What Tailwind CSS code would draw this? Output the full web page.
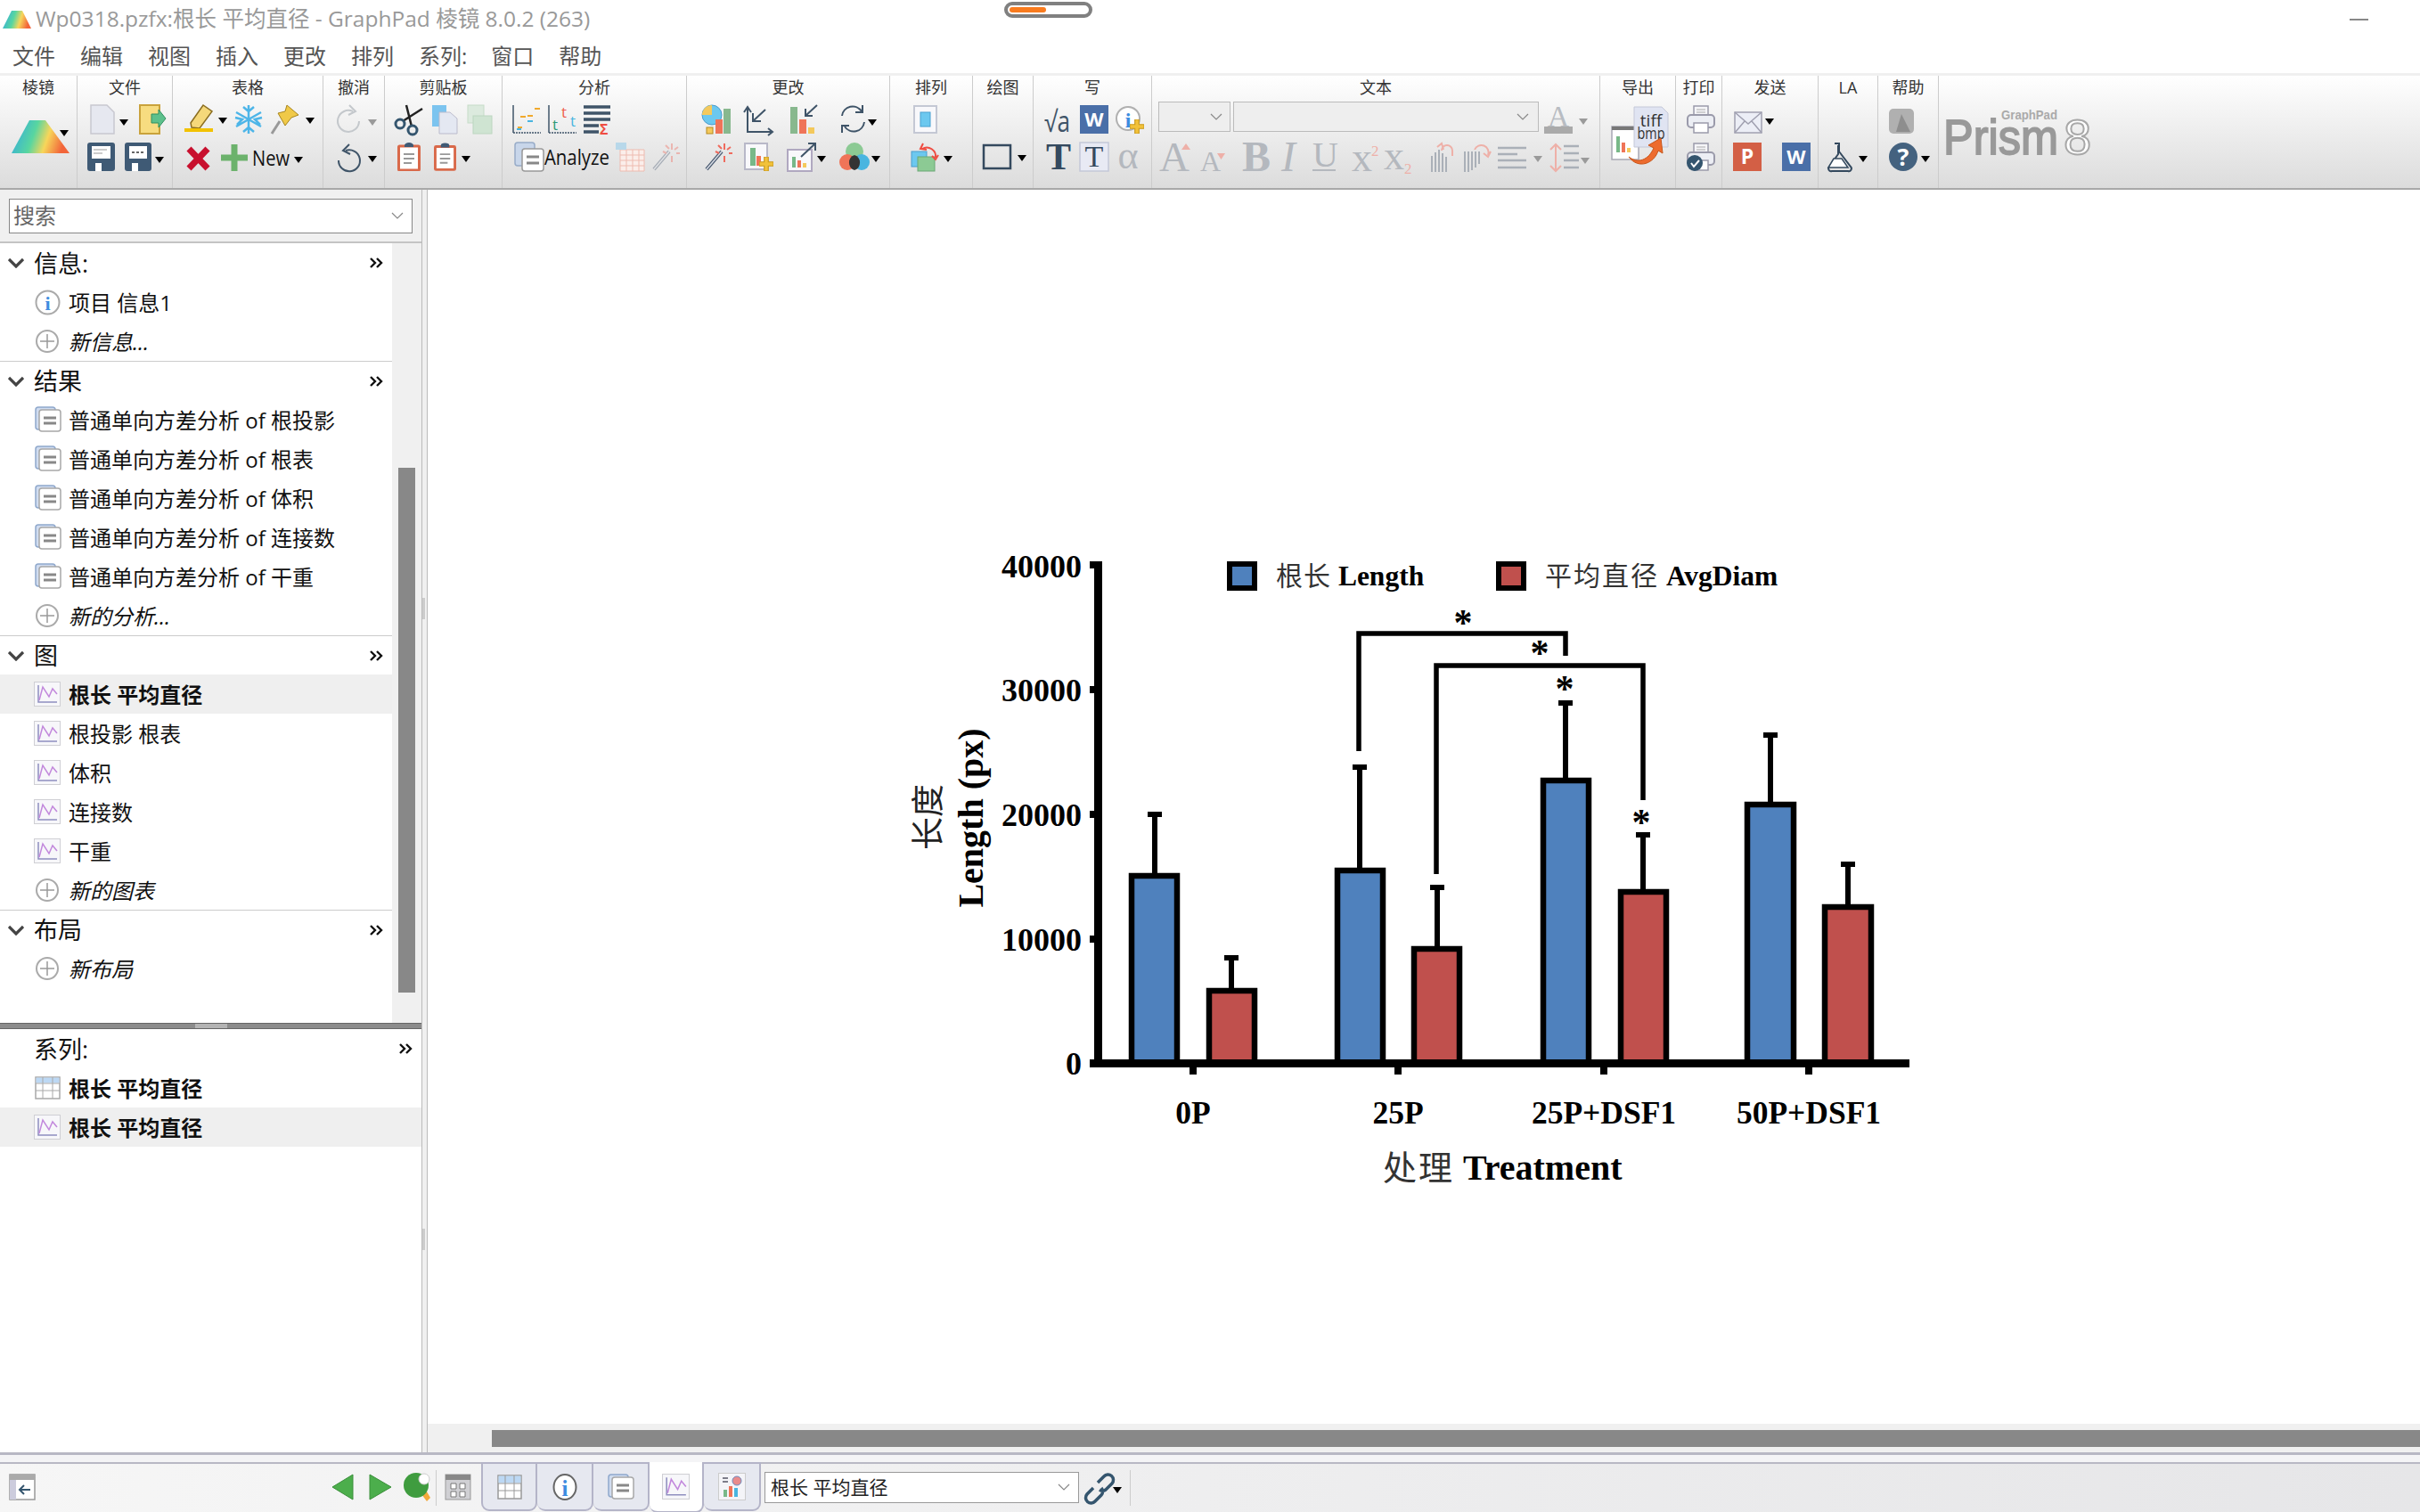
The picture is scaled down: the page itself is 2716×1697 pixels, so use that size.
<!DOCTYPE html>
<html lang="zh-CN">
<head>
    <meta charset="UTF-8">
    <title>GraphPad Prism</title>
    <script src="https://cdn.jsdelivr.net/npm/@tailwindcss/browser@4"></script>
</head>
<body class="w-[2716px] h-[1697px] overflow-hidden flex flex-col bg-white text-[#111] font-['Open_Sans','Noto_Sans_CJK_SC',sans-serif]">

    <!-- shared icons -->
    <svg class="absolute w-0 h-0">
        <defs>
            <linearGradient id="prismGrad" x1="0" y1="0" x2="1" y2="0.2">
                <stop offset="0" stop-color="#2ea6e6"/><stop offset="0.45" stop-color="#58d6a0"/><stop offset="0.7" stop-color="#f7d65a"/><stop offset="1" stop-color="#f2653a"/>
            </linearGradient>
            <symbol id="arrow" viewBox="0 0 10 7"><path d="M0 0h10L5 7z" fill="#000"/></symbol>
            <symbol id="arrowGrey" viewBox="0 0 10 7"><path d="M0 0h10L5 7z" fill="#9a9a9a"/></symbol>
            <symbol id="graph" viewBox="0 0 30 28">
                <rect x="0.5" y="0.5" width="29" height="27" fill="#f7f7fa" stroke="#cfcfd4"/>
                <path d="M5 4v19h21" fill="none" stroke="#8f8fc0" stroke-width="1.5"/>
                <path d="M6 21l4-15 7 11 4-9 5 6" fill="none" stroke="#c288dc" stroke-width="1.5"/>
            </symbol>
            <symbol id="result" viewBox="0 0 30 30">
                <rect x="1" y="1" width="22" height="25" rx="3" fill="#d0dcf0" stroke="#8fa8cc" stroke-width="1.5"/>
                <rect x="5" y="4" width="24" height="24" rx="3" fill="#fff" stroke="#a8a8a8" stroke-width="1.5"/>
                <path d="M10 13h14M10 19h14" stroke="#888" stroke-width="3"/>
            </symbol>
            <symbol id="plus" viewBox="0 0 28 28">
                <circle cx="14" cy="14" r="12" fill="#fff" stroke="#aaa" stroke-width="2"/>
                <path d="M14 6v16M6 14h16" stroke="#999" stroke-width="1.5"/>
            </symbol>
            <symbol id="chevron" viewBox="0 0 18 12"><path d="M1 2l8 8 8-8" fill="none" stroke="#444" stroke-width="3.200"/></symbol>
            <symbol id="doubleRight" viewBox="0 0 16 12"><path d="M2 1l5 5-5 5M9 1l5 5-5 5" fill="none" stroke="#111" stroke-width="2.4"/></symbol>
            <symbol id="combo" viewBox="0 0 14 9"><path d="M1 1l6 6 6-6" fill="none" stroke="#888" stroke-width="1.2"/></symbol>
            <symbol id="clipboard" viewBox="0 0 26 32">
                <rect x="1.5" y="4" width="23" height="27" rx="1" fill="#fff" stroke="#d9694a" stroke-width="3"/>
                <path d="M8 5V3a5 3 0 0 1 10 0v2z" fill="#3f5a75"/>
                <path d="M7 13h12M7 18h12M7 23h9" stroke="#999" stroke-width="2"/>
            </symbol>
            <symbol id="printer" viewBox="0 0 32 32">
                <rect x="8" y="1" width="16" height="12" fill="#f5f5f8" stroke="#9a9aaa" stroke-width="1.5"/>
                <rect x="1" y="11" width="30" height="14" rx="4" fill="#eceef4" stroke="#9a9aaa" stroke-width="2"/>
                <rect x="8" y="20" width="16" height="11" fill="#fff" stroke="#9a9aaa" stroke-width="1.5"/>
                <path d="M11 5h10M11 8h10" stroke="#aaa"/>
            </symbol>
            <symbol id="wand" viewBox="0 0 32 32">
                <path d="M3 30L20 10" stroke="#4a5a70" stroke-width="4"/>
                <path d="M3 30L20 10" stroke="#d8dce4" stroke-width="1.5"/>
                <path d="M23 1v7M23 15v7M13 10l4 2M28 12h4M16 3l4 4M30 5l-4 3" stroke="#ef6b5e" stroke-width="2"/>
            </symbol>
            <symbol id="cross" viewBox="0 0 14 14"><path d="M5 0h4v5h5v4H9v5H5V9H0V5h5z" fill="#f2c23a" stroke="#c99a20"/></symbol>
        </defs>
    </svg>

    <!-- title bar -->
    <header class="relative h-[42px] flex items-center pl-[3px] shrink-0">
        <svg width="32" height="20" viewBox="0 0 32 20" class="mt-[2px]"><path d="M10 0h12l10 20H0z" fill="url(#prismGrad)"/></svg>
        <span class="ml-[5px] text-[24.5px] leading-none text-[#999]">Wp0318.pzfx:根长 平均直径 - GraphPad 棱镜 8.0.2 (263)</span>
        <div class="absolute left-[1127px] top-[2px] w-[99px] h-[18px] rounded-[9px] border-[4px] border-[#808080] bg-white p-[2px]">
            <div class="w-[41px] h-[6px] rounded-[3px] bg-[#f97b1e]"></div>
        </div>
        <div class="absolute left-[2637px] top-[21px] w-[21px] h-[2px] bg-[#888]"></div>
    </header>

    <!-- menu bar -->
    <nav class="h-[40px] flex items-center pl-[14px] pt-[2px] gap-[28px] text-[24px] leading-none text-[#555] shrink-0">
        <span>文件</span><span>编辑</span><span>视图</span><span>插入</span><span>更改</span><span>排列</span><span class="mr-[-1px]">系列:</span><span>窗口</span><span>帮助</span>
    </nav>

    <!-- ribbon -->
    <section class="h-[131px] flex shrink-0 border-t-[3px] border-[#f0f0f0] border-b-[2px] border-b-[#a8a8a8] bg-linear-to-b from-white to-[#dcdcdc] text-[18px] leading-none text-[#333]">
        <div class="w-[87px] flex flex-col border-r border-[#ccc]">
            <div class="h-[25px] flex items-center justify-center">棱镜</div>
            <svg width="86" height="101" viewBox="0 110 86 101">
                <path d="M33 135h18l27 37H13z" fill="url(#prismGrad)"/>
                <use href="#arrow" x="67" y="146" width="10" height="7"/>
            </svg>
        </div>
        <div class="w-[107px] flex flex-col border-r border-[#ccc]">
            <div class="h-[25px] flex items-center justify-center">文件</div>
            <svg width="106" height="101" viewBox="87 110 106 101">
                <path d="M102 118h18l8 8v24h-26z" fill="#e6e8f0" stroke="#c8c8d0" stroke-width="1.5"/>
                <use href="#arrow" x="134" y="134" width="10" height="7"/>
                <rect x="157" y="118" width="22" height="32" fill="#f7dc80" stroke="#c9a23c" stroke-width="2"/>
                <path d="M170 128h8v-5l8 10-8 10v-5h-8z" fill="#5cc08c" stroke="#2f8f60"/>
                <rect x="98" y="160" width="31" height="32" rx="3" fill="#3f5a75"/><rect x="103" y="164" width="21" height="14" fill="#fff"/><rect x="107" y="183" width="7" height="9" fill="#fff"/>
                <path d="M105 168h15M105 172h10" stroke="#999"/>
                <rect x="140" y="160" width="30" height="32" rx="3" fill="#3f5a75"/><rect x="145" y="164" width="20" height="14" fill="#fff"/><rect x="148" y="183" width="7" height="9" fill="#fff"/>
                <path d="M148 171h3M153 171h3M158 171h3" stroke="#666" stroke-width="2"/>
                <use href="#arrow" x="174" y="176" width="10" height="7"/>
            </svg>
        </div>
        <div class="w-[169px] flex flex-col border-r border-[#ccc]">
            <div class="h-[25px] flex items-center justify-center">表格</div>
            <svg width="168" height="101" viewBox="194 110 168 101">
                <path d="M214 138l14-20 10 7-14 19-9-1z" fill="#f5d87a" stroke="#8a6d20" stroke-width="1.5"/><rect x="207" y="144" width="32" height="4" fill="#f2c200"/>
                <use href="#arrow" x="245" y="132" width="10" height="7"/>
                <path d="M279 118v32M265 126l28 16M265 142l28-16M273 120l6 5 6-5M273 148l6-5 6 5M264 132l8 2-6 6M294 132l-8 2 6 6" fill="none" stroke="#4db5e8" stroke-width="2.5"/>
                <path d="M322 118l13 11-8 3-7 9-8-14 8-2z" fill="#f0c948" stroke="#a88620"/><path d="M314 136l-9 14" stroke="#999" stroke-width="3"/>
                <use href="#arrow" x="343" y="132" width="10" height="7"/>
                <path d="M212 167l21 22M233 167l-21 22" stroke="#c8102e" stroke-width="7"/>
                <path d="M263 162v30M248 177h30" stroke="#6cb26c" stroke-width="7"/>
                <text x="283" y="186" font-size="23" textLength="42" lengthAdjust="spacingAndGlyphs" fill="#111">New</text>
                <use href="#arrow" x="330" y="176" width="10" height="7"/>
            </svg>
        </div>
        <div class="w-[69px] flex flex-col border-r border-[#ccc]">
            <div class="h-[25px] flex items-center justify-center">撤消</div>
            <svg width="68" height="101" viewBox="363 110 68 101">
                <path d="M396 125a12 12 0 1 0 7 11M392 118l7 7-8 4" fill="none" stroke="#c4c8cc" stroke-width="2"/>
                <use href="#arrowGrey" x="413" y="134" width="10" height="7"/>
                <path d="M388 169a12 12 0 1 1-8 11M392 162l-7 7 8 4" fill="none" stroke="#3f5468" stroke-width="2"/>
                <use href="#arrow" x="413" y="175" width="10" height="7"/>
            </svg>
        </div>
        <div class="w-[132px] flex flex-col border-r border-[#ccc]">
            <div class="h-[25px] flex items-center justify-center">剪贴板</div>
            <svg width="131" height="101" viewBox="432 110 131 101">
                <path d="M474 122l-22 14M456 118l6 24" stroke="#222" stroke-width="2.5"/>
                <circle cx="449" cy="139" r="5" fill="none" stroke="#34556e" stroke-width="3"/><circle cx="463" cy="146" r="5" fill="none" stroke="#34556e" stroke-width="3"/>
                <rect x="485" y="118" width="16" height="24" fill="#7cc4ef"/><path d="M493 126h12l8 7v17h-20z" fill="#e4e8f2" stroke="#bbc"/>
                <rect x="525" y="118" width="18" height="20" fill="#dceade" stroke="#c6dcc8"/><rect x="531" y="130" width="21" height="20" fill="#cfe4d2" stroke="#bcd6c0"/>
                <use href="#clipboard" x="446" y="160" width="26" height="32"/>
                <use href="#clipboard" x="487" y="160" width="25" height="32"/>
                <use href="#arrow" x="518" y="175" width="10" height="7"/>
            </svg>
        </div>
        <div class="w-[207px] flex flex-col border-r border-[#ccc]">
            <div class="h-[25px] flex items-center justify-center">分析</div>
            <svg width="206" height="101" viewBox="564 110 206 101">
                <path d="M576 118v31" fill="none" stroke="#3f5468" stroke-width="1.5"/><path d="M576 149h31" stroke="#3f5468" stroke-width="1.5" stroke-dasharray="2 1"/>
                <path d="M581 143h5M592 130h6M584 131h6M600 122h6" stroke="#f0a92c" stroke-width="2"/><path d="M580 145h5M592 136h6" stroke="#49b5e0" stroke-width="2"/>
                <path d="M616 118v31" fill="none" stroke="#3f5468" stroke-width="1.5"/><path d="M616 149h31" stroke="#3f5468" stroke-width="1.5" stroke-dasharray="2 1"/>
                <text x="620" y="146" font-size="17" fill="#2e9a78">t</text><text x="630" y="132" font-size="17" fill="#ef5e4e">t</text><text x="640" y="142" font-size="17" fill="#49b5e0">t</text>
                <path d="M655 120h30M655 127h30M655 134h30M655 141h17M655 148h17" stroke="#3f5468" stroke-width="3.5"/>
                <text x="673" y="151" font-size="16" font-weight="700" fill="#ef4d42">Σ</text>
                <rect x="578" y="160" width="22" height="26" rx="3" fill="#c8d6ea" stroke="#98acc8" stroke-width="1.5"/>
                <rect x="586" y="167" width="24" height="25" rx="3" fill="#fff" stroke="#999" stroke-width="1.5"/>
                <path d="M591 176h14M591 183h14" stroke="#888" stroke-width="3"/>
                <text x="611" y="185" font-size="24" textLength="73" lengthAdjust="spacingAndGlyphs" fill="#111">Analyze</text>
                <path d="M696 168h27v24h-27zM703 168v24M710 168v24M717 168v24M696 174h27M696 180h27M696 186h27" fill="#fbeeea" stroke="#eebbb0"/>
                <path d="M691 160h12v8h-12z" fill="#b8d8ea"/>
                <use href="#wand" x="731" y="160" width="32" height="32" opacity="0.4"/>
            </svg>
        </div>
        <div class="w-[228px] flex flex-col border-r border-[#ccc]">
            <div class="h-[25px] flex items-center justify-center">更改</div>
            <svg width="227" height="101" viewBox="771 110 227 101">
                <circle cx="799" cy="129" r="11" fill="#6cc8ef" stroke="#4a9ccc"/><path d="M799 129v-11a11 11 0 0 0-11 11z" fill="#f4c95c"/>
                <rect x="812" y="122" width="8" height="28" fill="#88b88e"/><rect x="803" y="134" width="8" height="16" fill="#ef7458"/><rect x="793" y="143" width="7" height="7" fill="#f4c95c" stroke="#b58a20"/>
                <path d="M839 121v27h27M835 126l4-6 4 6M862 144l5 4-5 4M845 136l14-13M845 127v9h9" fill="none" stroke="#3f5468" stroke-width="2"/>
                <rect x="887" y="120" width="8" height="30" fill="#88b88e"/><rect x="897" y="134" width="8" height="16" fill="#ef7458"/><rect x="907" y="143" width="7" height="7" fill="#f4c95c"/>
                <path d="M904 130l13-12M904 122v8h8" fill="none" stroke="#3f5468" stroke-width="2"/>
                <path d="M945 130a12 12 0 0 1 22-5M970 137a12 12 0 0 1-22 5M968 118v8h-8M945 149v-8h8" fill="none" stroke="#3f5468" stroke-width="2"/>
                <use href="#arrow" x="974" y="134" width="10" height="7"/>
                <use href="#wand" x="790" y="160" width="32" height="32"/>
                <rect x="836" y="161" width="25" height="29" fill="#f8f8fb" stroke="#b8b8c8" stroke-width="2"/><rect x="842" y="166" width="6" height="20" fill="#78b888"/><rect x="849" y="175" width="5" height="11" fill="#ef7458"/>
                <use href="#cross" x="852" y="176" width="16" height="16"/>
                <rect x="884" y="168" width="27" height="24" fill="#f8f8fb" stroke="#b0a8c0" stroke-width="2"/><rect x="889" y="176" width="4" height="12" fill="#78b888"/><rect x="895" y="180" width="4" height="8" fill="#ef7458"/><rect x="901" y="183" width="4" height="5" fill="#f4c95c"/>
                <path d="M899 176l16-15M907 161h8v8" fill="none" stroke="#3f5468" stroke-width="2"/>
                <use href="#arrow" x="917" y="175" width="10" height="7"/>
                <ellipse cx="959" cy="170" rx="10" ry="10" fill="#8cca94"/><circle cx="951" cy="182" r="9" fill="#ef7458"/><circle cx="967" cy="182" r="9" fill="#49b5e0"/><path d="M959 174a9 9 0 0 0 0 17 9 9 0 0 0 0-17z" fill="#333"/>
                <use href="#arrow" x="978" y="175" width="10" height="7"/>
            </svg>
        </div>
        <div class="w-[93px] flex flex-col border-r border-[#ccc]">
            <div class="h-[25px] flex items-center justify-center">排列</div>
            <svg width="92" height="101" viewBox="999 110 92 101">
                <rect x="1026" y="119" width="25" height="30" fill="#f8f8fb" stroke="#c4c8d4" stroke-width="2"/><rect x="1033" y="126" width="11" height="16" fill="#6cc8ef" stroke="#49a0d0"/>
                <rect x="1023" y="170" width="17" height="17" fill="#6cc8ef" stroke="#4a9ccc"/><rect x="1030" y="176" width="19" height="16" fill="#8cca94" stroke="#6aa874"/>
                <path d="M1035 167a10 10 0 0 1 15 10M1036 161l-3 6 7 1M1046 175l4 4 3-5" fill="none" stroke="#ef4d42" stroke-width="2"/>
                <use href="#arrow" x="1059" y="175" width="10" height="7"/>
            </svg>
        </div>
        <div class="w-[68px] flex flex-col border-r border-[#ccc]">
            <div class="h-[25px] flex items-center justify-center">绘图</div>
            <svg width="67" height="101" viewBox="1092 110 67 101">
                <rect x="1104" y="163" width="30" height="26" fill="none" stroke="#34495e" stroke-width="2.5"/>
                <use href="#arrow" x="1142" y="174" width="10" height="7"/>
            </svg>
        </div>
        <div class="w-[133px] flex flex-col border-r border-[#ccc]">
            <div class="h-[25px] flex items-center justify-center">写</div>
            <svg width="132" height="101" viewBox="1160 110 132 101">
                <text x="1172" y="148" font-size="32" textLength="29" lengthAdjust="spacingAndGlyphs" fill="#3f5468">√a</text>
                <rect x="1212" y="118" width="32" height="32" fill="#4a6fa8"/><text x="1228" y="142" font-size="22" font-weight="700" text-anchor="middle" fill="#fff">W</text>
                <circle cx="1266" cy="133" r="13" fill="#fff" stroke="#b0b0b0" stroke-width="2"/><text x="1266" y="143" font-size="24" font-weight="700" font-family="Liberation Serif" text-anchor="middle" fill="#3d8ce0">i</text>
                <use href="#cross" x="1268" y="134" width="16" height="16"/>
                <text x="1188" y="190" font-size="42" font-weight="700" font-family="Liberation Serif" text-anchor="middle" fill="#34495e">T</text>
                <rect x="1212" y="160" width="32" height="32" fill="#e8eaf4" stroke="#c4c8d8" stroke-width="1.5"/><text x="1228" y="187" font-size="34" font-family="Liberation Serif" text-anchor="middle" fill="#34495e">T</text>
                <text x="1266" y="189" font-size="44" font-family="Liberation Serif" text-anchor="middle" fill="#b4b8be">α</text>
            </svg>
        </div>
        <div class="w-[503px] flex flex-col border-r border-[#ccc]">
            <div class="h-[25px] flex items-center justify-center">文本</div>
            <svg width="502" height="101" viewBox="1293 110 502 101" font-family="Liberation Serif">
                <rect x="1300.5" y="114.5" width="80" height="33" fill="#eee" stroke="#bbb"/><use href="#combo" x="1358" y="127" width="14" height="9"/>
                <rect x="1384.5" y="114.5" width="342" height="33" fill="#eee" stroke="#bbb"/><use href="#combo" x="1702" y="127" width="14" height="9"/>
                <text x="1749" y="142" font-size="34" text-anchor="middle" fill="#b8bcc2">A</text><rect x="1733" y="142" width="32" height="8" fill="#aaa"/>
                <use href="#arrowGrey" x="1772" y="133" width="10" height="7"/>
                <g fill="#b4b8be">
                    <text x="1301" y="192" font-size="47">A</text><path d="M1331 161l5 7h-10z" fill="#eeb0a8"/>
                    <text x="1347" y="192" font-size="32">A</text><path d="M1366 172h9l-4.500 7z" fill="#eeb0a8"/>
                    <text x="1394" y="192" font-size="48" font-weight="700">B</text>
                    <text x="1438" y="192" font-size="48" font-style="italic">I</text>
                    <text x="1473" y="187" font-size="40">U</text><rect x="1473" y="190" width="26" height="2"/>
                    <text x="1517" y="192" font-size="46">x</text><text x="1539" y="175" font-size="17" fill="#eeb0a8">2</text>
                    <text x="1553" y="190" font-size="46">x</text><text x="1576" y="195" font-size="17" fill="#eeb0a8">2</text>
                </g>
                <path d="M1607 175v18M1611 171v22M1615 168v25M1619 172v21M1623 176v17" stroke="#aab0b8" stroke-width="2"/><path d="M1630 175v-6a6 6 0 0 0-12 0M1613 165l5-4 2 7" fill="none" stroke="#eeb0a8" stroke-width="2"/>
                <path d="M1644 170v23M1648 170v23M1652 170v21M1656 170v18M1660 170v14" stroke="#aab0b8" stroke-width="2"/><path d="M1655 168a7 7 0 0 1 15 6M1665 172l5 4 3-6" fill="none" stroke="#eeb0a8" stroke-width="2"/>
                <path d="M1681 166h32M1681 173h22M1681 180h32M1681 188h32" stroke="#aab0b8" stroke-width="2.5"/>
                <use href="#arrowGrey" x="1721" y="175" width="10" height="7"/>
                <path d="M1746 162v30M1740 168l6-6 6 6M1740 186l6 6 6-6" fill="none" stroke="#eeb0a8" stroke-width="2"/>
                <path d="M1755 164h17M1755 172h17M1755 180h17M1755 188h17" stroke="#aab0b8" stroke-width="2.5"/>
                <use href="#arrowGrey" x="1774" y="177" width="10" height="7"/>
            </svg>
        </div>
        <div class="w-[85px] flex flex-col border-r border-[#ccc]">
            <div class="h-[25px] flex items-center justify-center">导出</div>
            <svg width="84" height="101" viewBox="1796 110 84 101">
                <rect x="1809" y="142" width="30" height="37" fill="#fff" stroke="#a8a8b4" stroke-width="1.5"/><rect x="1809" y="142" width="30" height="4" fill="#777"/>
                <rect x="1814" y="153" width="4" height="18" fill="#78b888"/><rect x="1820" y="160" width="4" height="11" fill="#ef7458"/><rect x="1826" y="166" width="4" height="5" fill="#f4c95c"/>
                <path d="M1834 120h31l7 7v38h-38z" fill="#e0e4f2" stroke="#c4c8d8"/>
                <text x="1853" y="142" font-size="19" text-anchor="middle" fill="#333">tiff</text>
                <text x="1853" y="156" font-size="19" text-anchor="middle" textLength="31" lengthAdjust="spacingAndGlyphs" fill="#333">bmp</text>
                <path d="M1828 176c10 8 22 4 28-10l-6-3 14-8 2 17-5-3c-4 14-22 22-33 7z" fill="#ed6b2e" stroke="#c85518"/>
            </svg>
        </div>
        <div class="w-[52px] flex flex-col border-r border-[#ccc]">
            <div class="h-[25px] flex items-center justify-center">打印</div>
            <svg width="51" height="101" viewBox="1881 110 51 101">
                <use href="#printer" x="1893" y="118" width="32" height="32"/>
                <use href="#printer" x="1893" y="160" width="32" height="32"/>
                <circle cx="1902" cy="183" r="9" fill="#34556e"/><path d="M1898 183l3 4 6-7" fill="none" stroke="#fff" stroke-width="2"/>
            </svg>
        </div>
        <div class="w-[108px] flex flex-col border-r border-[#ccc]">
            <div class="h-[25px] flex items-center justify-center">发送</div>
            <svg width="107" height="101" viewBox="1933 110 107 101">
                <rect x="1947" y="126" width="30" height="23" fill="#eceef6" stroke="#a0a0b0" stroke-width="1.5"/><path d="M1947 126l15 13 15-13M1947 149l11-13M1977 149l-11-13" fill="none" stroke="#a0a0b0" stroke-width="1.5"/>
                <use href="#arrow" x="1981" y="133" width="10" height="7"/>
                <rect x="1945" y="160" width="32" height="32" fill="#d35f45"/><text x="1961" y="184" font-size="23" font-weight="700" text-anchor="middle" fill="#fff">P</text>
                <rect x="2000" y="160" width="32" height="32" fill="#4a6fa8"/><text x="2016" y="184" font-size="22" font-weight="700" text-anchor="middle" fill="#fff">W</text>
            </svg>
        </div>
        <div class="w-[67px] flex flex-col border-r border-[#ccc]">
            <div class="h-[25px] flex items-center justify-center">LA</div>
            <svg width="66" height="101" viewBox="2041 110 66 101">
                <path d="M2059 161h5v9l13 17a3 3 0 0 1-3 5h-18a3 3 0 0 1-3-5l10-14v-10" fill="none" stroke="#34495e" stroke-width="2"/>
                <path d="M2058 178l-6 10h22l-7-10z" fill="#fff" stroke="#34495e" stroke-width="1.5"/>
                <use href="#arrow" x="2086" y="175" width="10" height="7"/>
            </svg>
        </div>
        <div class="w-[68px] flex flex-col border-r border-[#ccc]">
            <div class="h-[25px] flex items-center justify-center">帮助</div>
            <svg width="67" height="101" viewBox="2108 110 67 101">
                <rect x="2120" y="122" width="28" height="28" rx="5" fill="#b0b0b0"/><path d="M2134 128l10 20h-16z" fill="#8e8e8e"/>
                <circle cx="2136" cy="176" r="16" fill="#44627f"/><text x="2136" y="186" font-size="27" font-weight="700" text-anchor="middle" fill="#fff">?</text>
                <use href="#arrow" x="2156" y="175" width="10" height="7"/>
            </svg>
        </div>
        <svg width="180" height="101" viewBox="2176 110 180 101" class="mt-[25px]">
            <text x="2181" y="173" font-size="56" font-family="Liberation Sans" textLength="129" lengthAdjust="spacingAndGlyphs" fill="#999" stroke="#999" stroke-width="1.800">Prism</text>
            <text x="2246" y="134" font-size="15" font-family="Liberation Sans" font-weight="700" fill="#aaa" textLength="63" lengthAdjust="spacingAndGlyphs">GraphPad</text>
            <text x="2316" y="173" font-size="56" font-family="Liberation Sans" font-weight="400" fill="#fff" stroke="#a8a8a8" stroke-width="2">8</text>
        </svg>
    </section>

    <!-- body -->
    <main class="flex flex-1 min-h-0">
        <!-- left navigator -->
        <aside class="relative w-[480px] flex shrink-0 bg-[#f0f0f0] [&_div>svg+span:not(.flex-1)]:pt-[2px]">
            <div class="w-[474px] flex flex-col border-r border-[#bbb]">
                <div class="h-[60px] flex items-center px-[10px] border-b-[2px] border-[#c4c4c4] shrink-0">
                    <div class="w-[453px] h-[39px] flex items-center justify-between bg-white border border-[#888] pl-[4px] pr-[9px]">
                        <span class="text-[24px] leading-none text-[#666]">搜索</span>
                        <svg width="14" height="9"><use href="#combo" width="14" height="9"/></svg>
                    </div>
                </div>
                <div class="h-[875px] flex shrink-0">
                    <div class="w-[440px] bg-white text-[24px] leading-none">
                        <div class="h-[133px] border-b border-[#ccc]">
                            <div class="h-[44px] flex items-center pl-[9px] pr-[10px]"><svg width="18" height="12" class="mr-[11px]"><use href="#chevron" width="18" height="12"/></svg><span class="flex-1 text-[27px]">信息:</span><svg width="16" height="12"><use href="#doubleRight" width="16" height="12"/></svg></div>
                            <div class="h-[44px] flex items-center pl-[39px] gap-[9px]"><svg width="29" height="29" viewBox="0 0 29 29"><circle cx="14.500" cy="14.500" r="13" fill="#fff" stroke="#aaa" stroke-width="2"/><text x="14.500" y="23" font-size="22" font-weight="700" font-family="Liberation Serif" text-anchor="middle" fill="#3d8ce0">i</text></svg><span>项目 信息1</span></div>
                            <div class="h-[44px] flex items-center pl-[39px] gap-[10px]"><svg width="28" height="28"><use href="#plus" width="28" height="28"/></svg><span class="italic">新信息...</span></div>
                        </div>
                        <div class="h-[308px] border-b border-[#ccc]">
                            <div class="h-[43px] flex items-center pl-[9px] pr-[10px]"><svg width="18" height="12" class="mr-[11px]"><use href="#chevron" width="18" height="12"/></svg><span class="flex-1 text-[27px]">结果</span><svg width="16" height="12"><use href="#doubleRight" width="16" height="12"/></svg></div>
                            <div class="h-[44px] flex items-center pl-[39px] gap-[8px]"><svg width="30" height="30"><use href="#result" width="30" height="30"/></svg><span>普通单向方差分析 of 根投影</span></div>
                            <div class="h-[44px] flex items-center pl-[39px] gap-[8px]"><svg width="30" height="30"><use href="#result" width="30" height="30"/></svg><span>普通单向方差分析 of 根表</span></div>
                            <div class="h-[44px] flex items-center pl-[39px] gap-[8px]"><svg width="30" height="30"><use href="#result" width="30" height="30"/></svg><span>普通单向方差分析 of 体积</span></div>
                            <div class="h-[44px] flex items-center pl-[39px] gap-[8px]"><svg width="30" height="30"><use href="#result" width="30" height="30"/></svg><span>普通单向方差分析 of 连接数</span></div>
                            <div class="h-[44px] flex items-center pl-[39px] gap-[8px]"><svg width="30" height="30"><use href="#result" width="30" height="30"/></svg><span>普通单向方差分析 of 干重</span></div>
                            <div class="h-[44px] flex items-center pl-[39px] gap-[10px]"><svg width="28" height="28"><use href="#plus" width="28" height="28"/></svg><span class="italic">新的分析...</span></div>
                        </div>
                        <div class="h-[308px] border-b border-[#ccc]">
                            <div class="h-[43px] flex items-center pl-[9px] pr-[10px]"><svg width="18" height="12" class="mr-[11px]"><use href="#chevron" width="18" height="12"/></svg><span class="flex-1 text-[27px]">图</span><svg width="16" height="12"><use href="#doubleRight" width="16" height="12"/></svg></div>
                            <div class="h-[44px] flex items-center pl-[38px] gap-[9px] bg-[#efefef]"><svg width="30" height="28"><use href="#graph" width="30" height="28"/></svg><span class="font-bold">根长 平均直径</span></div>
                            <div class="h-[44px] flex items-center pl-[38px] gap-[9px]"><svg width="30" height="28"><use href="#graph" width="30" height="28"/></svg><span>根投影 根表</span></div>
                            <div class="h-[44px] flex items-center pl-[38px] gap-[9px]"><svg width="30" height="28"><use href="#graph" width="30" height="28"/></svg><span>体积</span></div>
                            <div class="h-[44px] flex items-center pl-[38px] gap-[9px]"><svg width="30" height="28"><use href="#graph" width="30" height="28"/></svg><span>连接数</span></div>
                            <div class="h-[44px] flex items-center pl-[38px] gap-[9px]"><svg width="30" height="28"><use href="#graph" width="30" height="28"/></svg><span>干重</span></div>
                            <div class="h-[44px] flex items-center pl-[39px] gap-[10px]"><svg width="28" height="28"><use href="#plus" width="28" height="28"/></svg><span class="italic">新的图表</span></div>
                        </div>
                        <div class="h-[43px] flex items-center pl-[9px] pr-[10px]"><svg width="18" height="12" class="mr-[11px]"><use href="#chevron" width="18" height="12"/></svg><span class="flex-1 text-[27px]">布局</span><svg width="16" height="12"><use href="#doubleRight" width="16" height="12"/></svg></div>
                        <div class="h-[44px] flex items-center pl-[39px] gap-[10px]"><svg width="28" height="28"><use href="#plus" width="28" height="28"/></svg><span class="italic">新布局</span></div>
                    </div>
                    <!-- vertical scrollbar -->
                    <div class="w-[33px] pl-[7px] pt-[252px]"><div class="w-[19px] h-[589px] bg-[#888]"></div></div>
                </div>
                <div class="h-[7px] flex justify-center bg-[#8c8c8c] border-y border-[#666] shrink-0"><div class="w-[36px] bg-[#b4b4b4]"></div></div>
                <div class="flex-1 bg-white text-[24px] leading-none">
                    <div class="h-[44px] flex items-center pl-[38px] pr-[10px]"><span class="flex-1 text-[27px]">系列:</span><svg width="16" height="12"><use href="#doubleRight" width="16" height="12"/></svg></div>
                    <div class="h-[44px] flex items-center pl-[39px] gap-[9px]"><svg width="29" height="26" viewBox="0 0 29 26"><rect x="1" y="1" width="27" height="24" fill="#fff" stroke="#a8a8a8" stroke-width="1.5"/><rect x="1.500" y="1.500" width="26" height="6" fill="#bcd8f4"/><path d="M9 1v24M20 1v24M1 8h27M1 16h27" stroke="#a8a8a8"/></svg><span class="font-bold">根长 平均直径</span></div>
                    <div class="h-[44px] flex items-center pl-[38px] gap-[9px] bg-[#efefef]"><svg width="30" height="28"><use href="#graph" width="30" height="28"/></svg><span class="font-bold">根长 平均直径</span></div>
                </div>
            </div>
            <div class="w-[6px] border-r border-[#bbb]"></div>
            <div class="absolute left-[474px] top-[458px] w-[3px] h-[24px] bg-[#ccc]"></div>
            <div class="absolute left-[474px] top-[1166px] w-[3px] h-[24px] bg-[#ccc]"></div>
        </aside>

        <!-- graph sheet -->
        <div class="flex-1 flex flex-col min-w-0">
            <div class="flex-1 min-h-0">
                <svg width="2236" height="1385" viewBox="480 213 2236 1385" font-family="'Liberation Serif','Noto Sans CJK SC',serif" fill="#000">
                    <!-- legend -->
                    <rect x="1380" y="633" width="28" height="27" fill="#4f81bd" stroke="#000" stroke-width="6"/>
                    <text x="1432" y="657" font-size="31.500" font-weight="700"><tspan font-weight="400" font-size="30" letter-spacing="1" fill="#333">根长</tspan> Length</text>
                    <rect x="1682" y="633" width="28" height="27" fill="#c0504d" stroke="#000" stroke-width="6"/>
                    <text x="1734" y="657" font-size="31.500" font-weight="700"><tspan font-weight="400" font-size="30" letter-spacing="2" fill="#333">平均直径</tspan> AvgDiam</text>

                    <!-- error bars -->
                    <g stroke="#000" stroke-width="6" fill="none">
                        <path d="M1296 980V911M1288 914h16"/><path d="M1382 1109V1072M1374 1075h16"/>
                        <path d="M1526 974V858M1518 861h16"/><path d="M1613 1062V993M1605 996h16"/>
                        <path d="M1757 873V786M1749 789h16"/><path d="M1844 999V934M1836 937h16"/>
                        <path d="M1987 900V822M1979 825h16"/><path d="M2074 1015V967M2066 970h16"/>
                    </g>

                    <!-- bars -->
                    <g stroke="#000" stroke-width="6.500">
                        <rect x="1270" y="983" width="51" height="211" fill="#4f81bd"/><rect x="1357" y="1112" width="51" height="82" fill="#c0504d"/>
                        <rect x="1501" y="977" width="51" height="217" fill="#4f81bd"/><rect x="1587" y="1065" width="51" height="129" fill="#c0504d"/>
                        <rect x="1732" y="876" width="51" height="318" fill="#4f81bd"/><rect x="1819" y="1001" width="51" height="193" fill="#c0504d"/>
                        <rect x="1961" y="903" width="52" height="291" fill="#4f81bd"/><rect x="2048" y="1018" width="52" height="176" fill="#c0504d"/>
                    </g>

                    <!-- axes -->
                    <path d="M1228 630h9v568h-9zM1223 1189h920v9h-920zM1223 630h6v8h-6zM1223 770h6v8h-6zM1223 910h6v8h-6zM1223 1050h6v8h-6zM1335 1198h8v8h-8zM1565 1198h8v8h-8zM1796 1198h8v8h-8zM2026 1198h8v8h-8z"/>
                    <g font-size="36" font-weight="700" text-anchor="end">
                        <text x="1214" y="648">40000</text><text x="1214" y="787">30000</text><text x="1214" y="927">20000</text><text x="1214" y="1067">10000</text><text x="1214" y="1206">0</text>
                    </g>
                    <g font-size="35.500" font-weight="700" text-anchor="middle">
                        <text x="1339" y="1261">0P</text><text x="1569" y="1261">25P</text><text x="1800" y="1261">25P+DSF1</text><text x="2030" y="1261">50P+DSF1</text>
                    </g>
                    <text x="1552" y="1324" font-size="40" font-weight="700"><tspan font-weight="400" font-size="38" letter-spacing="2" fill="#333">处理</tspan> Treatment</text>
                    <g transform="translate(1055 917) rotate(-90)"><text font-size="37" text-anchor="middle" fill="#222">长度</text></g>
                    <g transform="translate(1103 918) rotate(-90)"><text font-size="40" font-weight="700" text-anchor="middle">Length (px)</text></g>

                    <!-- significance brackets -->
                    <g stroke="#000" stroke-width="5.500" fill="none">
                        <path d="M1525 843V711H1757V736"/>
                        <path d="M1612 981V747H1844V898"/>
                    </g>
                    <g font-size="42" font-weight="700" text-anchor="middle">
                        <text x="1642" y="713">*</text><text x="1728" y="747">*</text><text x="1756" y="787">*</text><text x="1842" y="937">*</text>
                    </g>
                </svg>
            </div>
            <!-- horizontal scrollbar -->
            <div class="h-[32px] pl-[72px] pt-[7px] bg-[#f0f0f0] shrink-0"><div class="h-[19px] bg-[#888]"></div></div>
        </div>
    </main>

    <!-- bottom toolbar -->
    <footer class="h-[67px] shrink-0 border-t-[3px] border-[#b8b8c4] bg-[#f4f4f6]">
        <div class="h-[8px]"></div>
        <div class="h-[56px] flex items-start border-t-[2px] border-[#b8b8c4] bg-linear-to-r from-[#f6f6f6] to-[#e6e6e8]">
            <svg width="490" height="54" viewBox="0 1643 490 54">
                <rect x="11" y="1655" width="28" height="28" fill="#fff" stroke="#999" stroke-width="1.5"/><rect x="11" y="1655" width="28" height="6" fill="#aaa"/><rect x="11" y="1661" width="7" height="22" fill="#ccd"/>
                <path d="M34 1672H22M27 1667l-5 5 5 5" fill="none" stroke="#34556e" stroke-width="2"/>
                <path d="M396 1655v28l-23-14z" fill="#4cae4c" stroke="#3a8f3a"/>
                <path d="M415 1655v28l24-14z" fill="#4cae4c" stroke="#3a8f3a"/>
                <path d="M470 1673l9 12 4-4-7-12z" fill="#f2a93c"/><circle cx="467" cy="1667" r="14" fill="#3f9c3f"/><circle cx="476" cy="1660" r="6" fill="#fff" stroke="#ccc"/>
                <path d="M489.500 1650v40" stroke="#ccc"/>
            </svg>
            <svg width="50" height="54" viewBox="490 1643 50 54">
                <rect x="500" y="1655" width="28" height="28" fill="#d0d0d4" stroke="#999"/><rect x="500" y="1655" width="28" height="6" fill="#888"/>
                <path d="M506 1665h6v6h-6zM516 1665h6v6h-6zM506 1674h6v6h-6zM516 1674h6v6h-6z" fill="#fff" stroke="#777"/>
            </svg>
            <!-- sheet tabs -->
            <div class="flex h-[53px] mt-[-2px]">
                <div class="w-[63px] h-[55px] flex items-center justify-center rounded-b-[9px] border-x-2 border-b-2 border-t-2 border-[#b4b4c8] bg-[#e6e8f0]">
                    <svg width="28" height="28" viewBox="0 0 28 28"><rect x="1" y="1" width="26" height="26" fill="#fff" stroke="#999" stroke-width="1.5"/><rect x="1.500" y="1.500" width="25" height="8" fill="#bcd8f4"/><path d="M9 1v26M19 1v26M1 10h26M1 18h26" stroke="#999"/></svg>
                </div>
                <div class="w-[63px] h-[55px] flex items-center justify-center rounded-b-[9px] border-y-2 border-r-2 border-[#b4b4c8] bg-[#e6e8f0]">
                    <svg width="28" height="30" viewBox="0 0 28 30"><ellipse cx="14" cy="15" rx="12.500" ry="14" fill="#fff" stroke="#666" stroke-width="2"/><text x="14" y="25" font-size="25" font-weight="700" font-family="Liberation Serif" text-anchor="middle" fill="#3d8ce0">i</text></svg>
                </div>
                <div class="w-[63px] h-[55px] flex items-center justify-center rounded-b-[9px] border-y-2 border-r-2 border-[#b4b4c8] bg-[#e6e8f0]">
                    <svg width="30" height="30"><use href="#result" width="30" height="30"/></svg>
                </div>
                <div class="w-[61px] h-[57px] flex items-center justify-center rounded-b-[9px] border-b-2 border-r-2 border-[#b4b4c8] bg-white">
                    <svg width="31" height="31"><use href="#graph" width="31" height="31"/></svg>
                </div>
                <div class="w-[64px] h-[55px] flex items-center justify-center rounded-b-[9px] border-y-2 border-r-2 border-[#b4b4c8] bg-[#e6e8f0]">
                    <svg width="31" height="31" viewBox="0 0 31 31"><rect x="0.500" y="0.500" width="30" height="30" fill="#f4f4f8" stroke="#ccc"/><rect x="6" y="19" width="4" height="8" fill="#78b888"/><rect x="12" y="15" width="4" height="12" fill="#ef7458"/><rect x="18" y="17" width="4" height="10" fill="#49b5e0"/><circle cx="21" cy="9" r="5" fill="#e98b8b" stroke="#6c8cc0"/><path d="M5 6h6M5 10h6" stroke="#556" stroke-width="1.500"/></svg>
                </div>
            </div>
            <div class="w-[353px] h-[35px] mt-[9px] ml-[4px] flex items-center justify-between bg-white border border-[#999] pl-[6px] pr-[9px]">
                <span class="text-[21px] leading-none text-[#222]">根长 平均直径</span>
                <svg width="14" height="9"><use href="#combo" width="14" height="9"/></svg>
            </div>
            <svg width="60" height="54" viewBox="1220 1643 60 54">
                <path d="M1238 1672l-7 7a6 6 0 0 0 9 8l7-7a6 6 0 0 0 0-8M1243 1666l7-7a6 6 0 0 1 9 8l-7 7a6 6 0 0 1-7 0" transform="translate(-2 -2)" fill="none" stroke="#34556e" stroke-width="3.500"/>
                <use href="#arrow" x="1258" y="1669" width="10" height="7"/>
                <path d="M1277.500 1650v40" stroke="#ccc"/>
            </svg>
        </div>
    </footer>
</body>
</html>
